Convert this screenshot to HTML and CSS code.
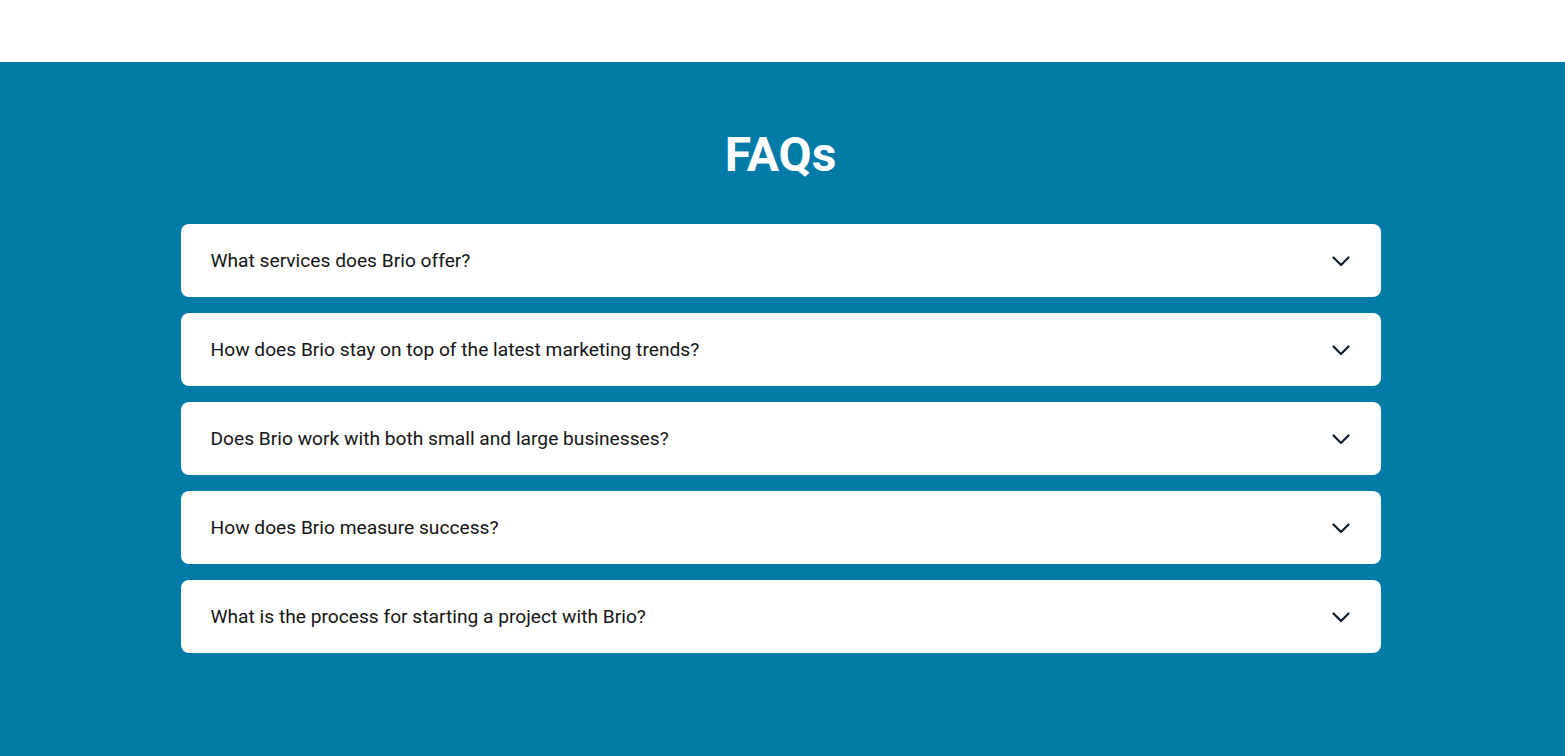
FILE: index.html
```html
<!DOCTYPE html>
<html lang="en">
<head>
<meta charset="utf-8">
<title>FAQs</title>
<link rel="stylesheet" href="styles.css">
</head>
<body>
<header class="topbar"></header>
<section class="faq">
  <h2 class="faq-title">FAQs</h2>
  <div class="faq-list">
    <div class="faq-item"><span class="faq-q">What services does Brio offer?</span><svg class="chev" viewBox="0 0 20 20" width="20" height="20"><path d="M2.5 7.5 L10 15 L17.5 7.5" fill="none" stroke="#0b1a2b" stroke-width="2.2" stroke-linecap="round" stroke-linejoin="round"/></svg></div>
    <div class="faq-item"><span class="faq-q">How does Brio stay on top of the latest marketing trends?</span><svg class="chev" viewBox="0 0 20 20" width="20" height="20"><path d="M2.5 7.5 L10 15 L17.5 7.5" fill="none" stroke="#0b1a2b" stroke-width="2.2" stroke-linecap="round" stroke-linejoin="round"/></svg></div>
    <div class="faq-item"><span class="faq-q">Does Brio work with both small and large businesses?</span><svg class="chev" viewBox="0 0 20 20" width="20" height="20"><path d="M2.5 7.5 L10 15 L17.5 7.5" fill="none" stroke="#0b1a2b" stroke-width="2.2" stroke-linecap="round" stroke-linejoin="round"/></svg></div>
    <div class="faq-item"><span class="faq-q">How does Brio measure success?</span><svg class="chev" viewBox="0 0 20 20" width="20" height="20"><path d="M2.5 7.5 L10 15 L17.5 7.5" fill="none" stroke="#0b1a2b" stroke-width="2.2" stroke-linecap="round" stroke-linejoin="round"/></svg></div>
    <div class="faq-item"><span class="faq-q">What is the process for starting a project with Brio?</span><svg class="chev" viewBox="0 0 20 20" width="20" height="20"><path d="M2.5 7.5 L10 15 L17.5 7.5" fill="none" stroke="#0b1a2b" stroke-width="2.2" stroke-linecap="round" stroke-linejoin="round"/></svg></div>
  </div>
</section>
</body>
</html>
```
FILE: styles.css
```css
* { box-sizing: border-box; }
html, body { margin: 0; padding: 0; }
body {
  font-family: Roboto, "Liberation Sans", Arial, sans-serif;
  background: #007ba8;
  min-height: 100vh;
}
.topbar {
  height: 62px;
  background: #ffffff;
}
.faq {
  background: #007ba8;
  padding: 64px 4px 103px 0;
  display: flex;
  flex-direction: column;
  align-items: center;
}
.faq-title {
  margin: 0 0 40px;
  font-size: 48px;
  line-height: 57.6px;
  font-weight: 700;
  color: #ffffff;
  text-align: center;
}
.faq-list {
  width: 1200px;
  display: flex;
  flex-direction: column;
  gap: 16px;
}
.faq-item {
  height: 73px;
  background: #ffffff;
  border-radius: 8px;
  padding: 0 30px;
  display: flex;
  align-items: center;
  justify-content: space-between;
}
.faq-q {
  font-size: 19.2px;
  line-height: 25px;
  color: #141414;
}
.chev { display: block; flex: none; }
```
